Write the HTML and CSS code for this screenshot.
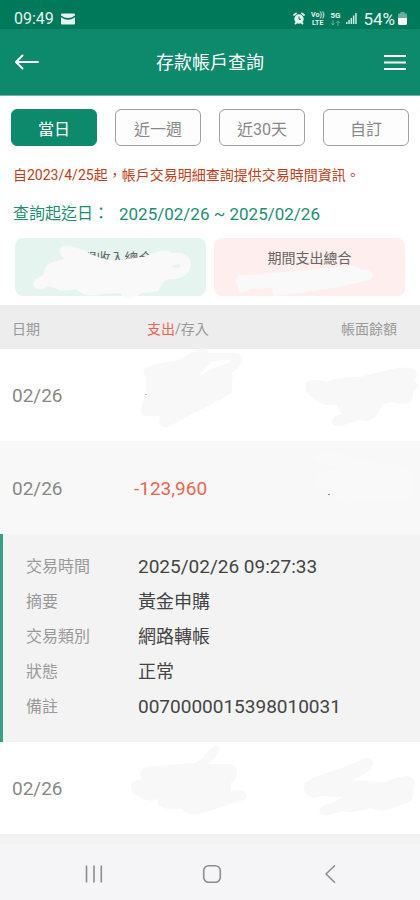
FILE: index.html
```html
<!DOCTYPE html>
<html lang="zh-Hant">
<head>
<meta charset="utf-8">
<meta name="viewport" content="width=device-width, initial-scale=1">
<title>存款帳戶查詢</title>
<link rel="stylesheet" href="styles.css">
</head>
<body>
<div class="status">
  <span>09:49</span>
  <svg class="mail" width="14" height="12" viewBox="0 0 14 12"><path fill="#e6f5ef" d="M1 .5h12q1 0 1 1v1Q7 7.500 0 2.500v-1q0-1 1-1zM0 4.200q7 5 14 0v6.300q0 1-1 1H1q-1 0-1-1z"/></svg>
  <div class="indicators">
    <svg width="12" height="13" viewBox="0 0 12 13" fill="none" stroke="#e6f5ef"><circle cx="6" cy="7" r="4.700" fill="#e6f5ef" stroke="none"/><path stroke-width="1.800" stroke-linecap="round" d="M1 3l2-1.600M11 3L9 1.400M2.500 11.500l1-1M9.500 11.500l-1-1"/><path stroke="#00785a" d="M6 4.500V7.300h2"/></svg>
    <span class="badge volte"><span>Vo))</span><span>LTE</span></span>
    <span class="badge"><span>5G</span><svg width="9" height="6" viewBox="0 0 9 6" fill="none" stroke="#66b09a"><path d="M2 0v5M.3 3.300L2 5l1.700-1.700M7 6V1M5.300 2.700L7 1l1.700 1.700"/></svg></span>
    <svg class="signal" width="11" height="11" viewBox="0 0 11 11"><path fill="#d0eae1" d="M0 9h1.500v2H0zM2.300 7h1.500v4H2.300zM4.600 5h1.500v6H4.600zM6.900 2.500h1.500V11H6.900zM9.200 0h1.500v11H9.200z"/></svg>
    <span class="percent">54%</span>
    <svg class="battery" width="9" height="13" viewBox="0 0 9 13"><path fill="#66b09a" d="M2.500 0h4v1.500H8q1 0 1 1V7H0V2.500q0-1 1-1h1.500z"/><path fill="#fff" d="M0 6h9v5.500q0 1.500-1.500 1.500h-6Q0 13 0 11.500z"/></svg>
  </div>
</div>
<header class="appbar">
  <button class="icon-button" aria-label="返回"><svg width="26" height="18" viewBox="0 0 26 18" fill="none" stroke="#fff" stroke-width="2" stroke-linecap="round" stroke-linejoin="round"><path d="M24 9H2M8.500 2.500L2 9l6.500 6.500"/></svg></button>
  <h1>存款帳戶查詢</h1>
  <button class="icon-button" aria-label="選單"><svg width="26" height="18" viewBox="0 0 26 18" stroke="#fff" stroke-width="2"><path d="M4 3h22M4 9.500h22M4 16h22"/></svg></button>
</header>
<main>
  <nav class="tabs">
    <button class="tab active">當日</button>
    <button class="tab">近一週</button>
    <button class="tab">近30天</button>
    <button class="tab">自訂</button>
  </nav>
  <p class="notice">自2023/4/25起，帳戶交易明細查詢提供交易時間資訊。</p>
  <p class="period"><span>查詢起迄日：</span><span class="dates">2025/02/26 ~ 2025/02/26</span></p>
  <section class="totals">
    <div class="card income">期間收入總合
      <svg class="smudge left" width="191" height="60" viewBox="15 238 191 60"><path fill="#f9f9f9" fill-rule="evenodd" d="M61 247Q67 245 74 247L84 250 91 254 100 258Q115 262 127 259L143 257 157 252Q167 249 172 253L182 253Q192 257 191 266Q189 274 182 277Q175 280 169 279Q164 280 161 285L158 291Q150 293 141 293Q136 299 127 298Q122 297 121 293L102 294Q88 298 80 292L75 289Q63 292 57 289L49 286Q42 292 35 288Q31 284 36 279L43 275Q44 264 54 262Q58 260 65 259Q57 254 61 247zM171 266Q176 270 180 267L181 265Q176 263 171 266z"/></svg>
    </div>
    <div class="card expense">期間支出總合
      <svg class="smudge left" width="191" height="58" viewBox="214 238 191 58"><path fill="#f9f9f9" d="M238 276Q241 274 247 275L285 272 311 270 347 266Q357 265 361 270Q370 269 373 274Q373 280 366 281L333 288 293 294 274 296Q271 291 273 288L250 289Q246 294 239 292L237 284Q234 279 238 276z"/></svg>
    </div>
  </section>
  <table class="ledger">
    <thead>
      <tr><th class="date" scope="col">日期</th><th class="flow" scope="col"><span class="out">支出</span>/存入</th><th class="balance" scope="col">帳面餘額</th></tr>
    </thead>
    <tbody>
      <tr class="entry">
        <td class="date">02/26</td>
        <td class="amount"><svg class="smudge left" width="140" height="92" viewBox="126 349 140 92"><path fill="#f8f8f8" fill-rule="evenodd" d="M144 370Q145 366 155 364L176 361 198 350Q206 346 209 353L225 353Q244 351 243 360Q240 369 231 373Q234 377 232 381L232 389Q232 393 225 397L168 427Q161 430 159 422L160 416 146 416Q139 414 141 407L144 400 146 392 146 377Q142 374 144 370zM197 378L207 371 225 364Q233 361 228 360Q216 360 211 362z"/><path fill="#f3b391" d="M145 394h2v1h-2z"/></svg></td>
        <td><svg class="smudge right" width="154" height="92" viewBox="266 349 154 92"><path fill="#f8f8f8" d="M306 384Q308 379 317 380L328 382Q333 377 360 377L391 369Q411 365 416 371Q418 376 415 380Q420 388 413 393Q414 402 405 404L390 402 383 404 377 414Q371 424 361 420L348 424Q335 430 332 422Q331 416 342 414Q339 412 337 405L325 405Q318 404 311 396Q303 391 306 384z"/></svg></td>
      </tr>
      <tr class="entry selected">
        <td class="date">02/26</td>
        <td class="amount">-123,960</td>
        <td><svg class="smudge right" width="154" height="94" viewBox="266 440 154 94"><path fill="#f9f9f9" d="M314 455Q320 448 342 453L369 461 407 465Q416 469 413 484Q413 500 395 500L340 502 331 489 316 486 318 472 337 466Q314 463 314 455z"/><path fill="#888" d="M328 493h2v1h-2z"/></svg></td>
      </tr>
      <tr>
        <td class="detail" colspan="3">
          <dl>
            <dt>交易時間</dt><dd>2025/02/26 09:27:33</dd>
            <dt>摘要</dt><dd class="words">黃金申購</dd>
            <dt>交易類別</dt><dd class="words">網路轉帳</dd>
            <dt>狀態</dt><dd class="words">正常</dd>
            <dt>備註</dt><dd>0070000015398010031</dd>
          </dl>
        </td>
      </tr>
      <tr class="entry">
        <td class="date">02/26</td>
        <td class="amount"><svg class="smudge left" width="140" height="92" viewBox="126 742 140 92"><path fill="#f8f8f8" d="M140 773Q142 767 152 766L195 763 204 757 210 749Q216 743 220 749Q220 754 208 764L226 764Q237 763 237 773Q237 779 231 783L231 791 238 790Q247 791 247 797Q246 801 233 803L203 813Q189 817 181 809L174 809Q163 810 158 804V799Q147 803 142 798L134 794Q129 789 132 782L141 779z"/></svg></td>
        <td><svg class="smudge right" width="154" height="92" viewBox="266 742 154 92"><path fill="#f8f8f8" d="M304 785Q308 779 323 774L350 765 362 759Q372 756 373 763Q372 770 363 775L352 780 385 782Q398 776 408 776Q418 779 414 787Q414 795 411 801L388 810Q380 812 371 808L353 812Q346 813 344 811L328 815Q320 816 319 810Q320 806 334 802L343 797 321 796 315 798Q303 796 304 785z"/></svg></td>
      </tr>
    </tbody>
  </table>
</main>
<footer class="system">
  <button class="icon-button" aria-label="最近使用"><svg width="20" height="20" viewBox="0 0 20 20" fill="none" stroke="#8d8d8f" stroke-width="1.600" stroke-linecap="round"><path d="M2.500 2v16M10 2v16M17.300 2v16"/></svg></button>
  <button class="icon-button" aria-label="首頁"><svg width="20" height="20" viewBox="0 0 20 20" fill="none" stroke="#8d8d8f" stroke-width="1.600"><rect x="1.700" y="1.700" width="16.600" height="16.600" rx="5"/></svg></button>
  <button class="icon-button" aria-label="返回上頁"><svg width="20" height="20" viewBox="0 0 20 20" fill="none" stroke="#8d8d8f" stroke-width="1.600" stroke-linecap="round" stroke-linejoin="round"><path d="M14.500 1.700L6 10l8.500 8.300"/></svg></button>
</footer>
</body>
</html>
```
FILE: styles.css
```css
* {
  box-sizing: border-box;
}
body {
  margin: 0;
  min-height: 100vh;
  display: flex;
  flex-direction: column;
  background: #fff;
  color: #444;
  font-family: Roboto, "Noto Sans CJK TC", sans-serif;
  font-size: 16px;
}
button {
  font: inherit;
  cursor: pointer;
}
svg {
  display: block;
}
.status {
  display: flex;
  align-items: center;
  height: 29px;
  padding: 8px 13px 0 14px;
  background: #00785a;
  color: #e6f5ef;
  line-height: 20px;
}
.mail {
  margin-left: 7px;
}
.indicators {
  display: flex;
  align-items: center;
  gap: 6px;
  margin-left: auto;
}
.percent {
  font-size: 17px;
}
.badge {
  display: flex;
  flex-direction: column;
  align-items: center;
  font-size: 8px;
  font-weight: 700;
  line-height: 8px;
}
.volte {
  font-size: 7px;
}
.battery {
  margin-left: -3px;
}
.appbar {
  display: flex;
  align-items: center;
  justify-content: space-between;
  height: 67px;
  padding: 0 14px;
  border-bottom: 1px solid #6bb7a3;
  background: #0d8a6c;
  color: #fff;
}
.icon-button {
  padding: 0;
  border: 0;
  background: none;
}
h1 {
  margin: 0;
  padding-top: 2px;
  font-size: 18px;
  font-weight: 400;
  line-height: 24px;
}
.tabs {
  display: grid;
  grid-template-columns: repeat(4, 1fr);
  gap: 18px;
  padding: 13px 11px 0;
}
.tab {
  height: 37px;
  padding: 0;
  border: 1px solid #a0a0a0;
  border-radius: 6px;
  background: #fdfdfd;
  color: #888;
}
.active {
  border-color: #0d8a6c;
  background: #0d8a6c;
  color: #fff;
}
p {
  margin: 0;
  padding: 0 13px;
}
.notice {
  margin-top: 19px;
  color: #c33d17;
  font-size: 14px;
  line-height: 20px;
}
.period {
  display: flex;
  align-items: center;
  gap: 10px;
  margin-top: 17px;
  color: #1b8f72;
  line-height: 24px;
}
.dates {
  font-size: 17px;
}
.totals {
  display: grid;
  grid-template-columns: 1fr 1fr;
  gap: 8px;
  padding: 12px 15px 9px;
}
.card {
  position: relative;
  height: 58px;
  padding-top: 10px;
  border-radius: 8px;
  color: #666;
  font-size: 14px;
  line-height: 20px;
  text-align: center;
}
.income {
  background: #e6f4f0;
}
.expense {
  background: #feeeed;
}
.smudge {
  position: absolute;
  top: 0;
  overflow: visible;
}
.left {
  left: 0;
}
.right {
  right: 0;
}
.ledger {
  width: 100%;
  border-spacing: 0;
  table-layout: fixed;
}
th {
  height: 44px;
  padding: 2px 0 0;
  background: #ededed;
  color: #999;
  font-size: 14px;
  font-weight: 400;
  text-align: left;
}
.ledger .date {
  width: 30%;
  padding-left: 12px;
}
.ledger .flow {
  padding-left: 21px;
}
.out {
  color: #eb6650;
}
.ledger .balance {
  width: 37%;
  padding-right: 23px;
  text-align: right;
}
td {
  padding: 0;
}
.entry td {
  position: relative;
  height: 92px;
  color: #888;
  font-size: 19px;
}
.selected td {
  height: 93px;
  padding-top: 2px;
  background: #f8f8f8;
}
.entry .amount {
  padding-left: 8px;
  color: #eb6650;
}
.detail {
  border-left: 3px solid #3b9f88;
  background: #f3f3f3;
}
dl {
  display: grid;
  grid-template-columns: 112px 1fr;
  margin: 0;
  padding: 15px 12px 18px 23px;
  line-height: 35px;
}
dt {
  color: #999;
}
dd {
  margin: 0;
  font-size: 19px;
}
.words {
  font-size: 18px;
}
.system {
  display: flex;
  flex: 1;
  align-items: center;
  justify-content: space-around;
  min-height: 66px;
  padding: 4px 31px 0 35px;
  border-top: 10px solid #f2f2f2;
  background: #f5f5f7;
}
```
